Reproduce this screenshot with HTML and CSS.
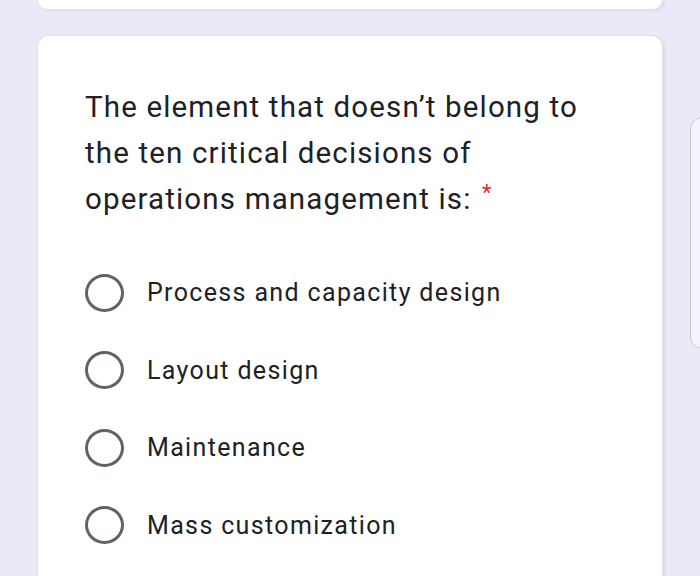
FILE: index.html
```html
<!DOCTYPE html>
<html>
<head>
<meta charset="utf-8">
<link rel="stylesheet" href="styles.css">
</head>
<body>
<div class="page">
  <div class="column">
    <div class="card card-prev"></div>
    <div class="card card-main">
      <div class="question">The element that doesn’t belong to the ten critical decisions of operations management is: <span class="req">*</span></div>
      <div class="options">
        <div class="option"><span class="radio"></span><span class="label">Process and capacity design</span></div>
        <div class="option"><span class="radio"></span><span class="label">Layout design</span></div>
        <div class="option"><span class="radio"></span><span class="label">Maintenance</span></div>
        <div class="option"><span class="radio"></span><span class="label">Mass customization</span></div>
      </div>
    </div>
  </div>
  <div class="side-peek"></div>
</div>
</body>
</html>
```
FILE: styles.css
```css
html, body {
  margin: 0;
  padding: 0;
  height: 576px;
  overflow: hidden;
  background: #ece8f7;
  font-family: Roboto, "Liberation Sans", sans-serif;
}
.page {
  display: flex;
  align-items: flex-start;
  width: 760px;
}
.column {
  margin-left: 37px;
  width: 626px;
  flex: none;
  display: flex;
  flex-direction: column;
  gap: 25px;
}
.card {
  box-sizing: border-box;
  background: #ffffff;
  border: 1px solid #e2dfea;
  box-shadow: 2px 1px 3px rgba(60, 50, 110, 0.08);
}
.card-prev {
  height: 10px;
  border-top: none;
  border-radius: 0 0 12px 12px;
}
.card-main {
  border-radius: 12px 12px 0 0;
  padding: 48px 40px 0 47px;
  height: 600px;
}
.question {
  font-size: 29.5px;
  line-height: 46px;
  letter-spacing: 1.15px;
  color: #202124;
  width: 520px;
}
.req {
  color: #d93025;
  font-size: 22px;
  vertical-align: top;
  margin-left: 2px;
  line-height: 34px;
  letter-spacing: 0;
}
.options {
  margin-top: 32px;
  display: flex;
  flex-direction: column;
}
.option {
  height: 77.5px;
  display: flex;
  align-items: center;
  gap: 23px;
}
.radio {
  box-sizing: border-box;
  width: 39px;
  height: 38px;
  border: 3.5px solid #5f6368;
  border-radius: 50%;
  flex: none;
}
.label {
  font-size: 25px;
  letter-spacing: 1.35px;
  color: #202124;
}
.side-peek {
  margin-left: 27px;
  margin-top: 117px;
  width: 30px;
  height: 230px;
  flex: none;
  background: #f4f2fa;
  border: 1px solid #cbc7d3;
  border-radius: 12px 0 0 12px;
}
```
